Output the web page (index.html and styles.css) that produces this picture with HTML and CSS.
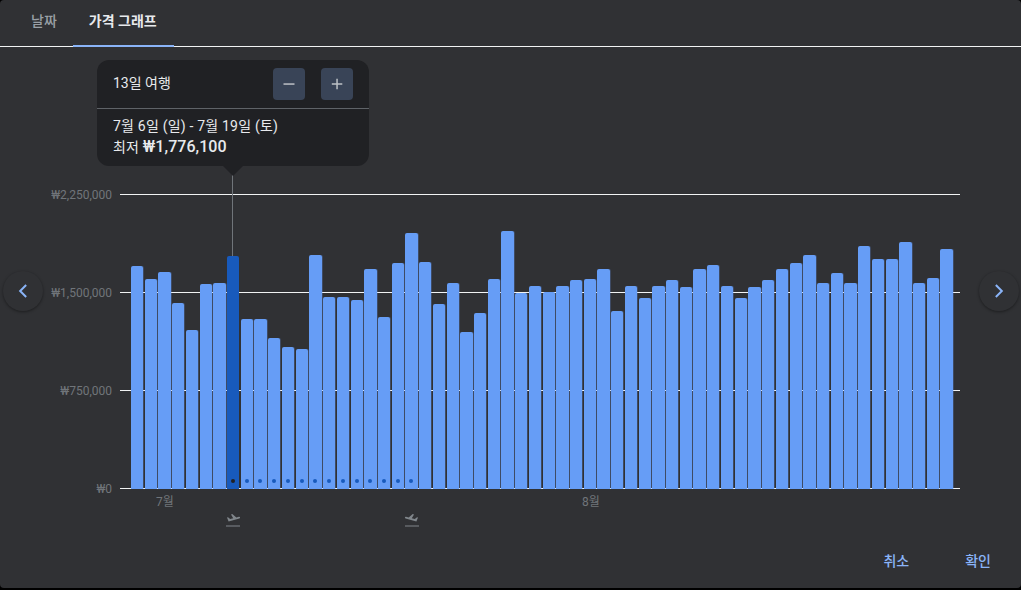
FILE: index.html
```html
<!DOCTYPE html>
<html lang="ko">
<head>
    <meta charset="UTF-8">
    <meta name="viewport" content="width=device-width, initial-scale=1.0">
    <title>가격 그래프</title>
    <link rel="stylesheet" href="styles.css">
</head>
<body>
    <div class="dialog">
        <!-- Tabs -->
        <div class="tabs">
            <div class="tab">날짜</div>
            <div class="tab tab-active">가격 그래프</div>
        </div>

        <!-- Chart -->
        <div class="chart">
            <div class="grid-line" style="top: 147px"></div>
            <div class="grid-line" style="top: 245px"></div>
            <div class="grid-line" style="top: 343px"></div>
            <div class="grid-line" style="top: 441px"></div>

            <div class="axis-label" style="top: 141px">₩2,250,000</div>
            <div class="axis-label" style="top: 239px">₩1,500,000</div>
            <div class="axis-label" style="top: 337px">₩750,000</div>
            <div class="axis-label" style="top: 435px">₩0</div>

            <div class="bars">
                <div class="bar" style="height: 223px"></div>
                <div class="bar" style="height: 210px"></div>
                <div class="bar" style="height: 217px"></div>
                <div class="bar" style="height: 186px"></div>
                <div class="bar" style="height: 159px"></div>
                <div class="bar" style="height: 205px"></div>
                <div class="bar" style="height: 206px"></div>
                <div class="bar bar-selected" style="height: 233px"><span class="dot"></span></div>
                <div class="bar" style="height: 170px"><span class="dot"></span></div>
                <div class="bar" style="height: 170px"><span class="dot"></span></div>
                <div class="bar" style="height: 151px"><span class="dot"></span></div>
                <div class="bar" style="height: 142px"><span class="dot"></span></div>
                <div class="bar" style="height: 140px"><span class="dot"></span></div>
                <div class="bar" style="height: 234px"><span class="dot"></span></div>
                <div class="bar" style="height: 192px"><span class="dot"></span></div>
                <div class="bar" style="height: 192px"><span class="dot"></span></div>
                <div class="bar" style="height: 189px"><span class="dot"></span></div>
                <div class="bar" style="height: 220px"><span class="dot"></span></div>
                <div class="bar" style="height: 172px"><span class="dot"></span></div>
                <div class="bar" style="height: 226px"><span class="dot"></span></div>
                <div class="bar" style="height: 256px"><span class="dot"></span></div>
                <div class="bar" style="height: 227px"></div>
                <div class="bar" style="height: 185px"></div>
                <div class="bar" style="height: 206px"></div>
                <div class="bar" style="height: 157px"></div>
                <div class="bar" style="height: 176px"></div>
                <div class="bar" style="height: 210px"></div>
                <div class="bar" style="height: 258px"></div>
                <div class="bar" style="height: 196px"></div>
                <div class="bar" style="height: 203px"></div>
                <div class="bar" style="height: 197px"></div>
                <div class="bar" style="height: 203px"></div>
                <div class="bar" style="height: 209px"></div>
                <div class="bar" style="height: 210px"></div>
                <div class="bar" style="height: 220px"></div>
                <div class="bar" style="height: 178px"></div>
                <div class="bar" style="height: 203px"></div>
                <div class="bar" style="height: 191px"></div>
                <div class="bar" style="height: 203px"></div>
                <div class="bar" style="height: 209px"></div>
                <div class="bar" style="height: 202px"></div>
                <div class="bar" style="height: 220px"></div>
                <div class="bar" style="height: 224px"></div>
                <div class="bar" style="height: 203px"></div>
                <div class="bar" style="height: 191px"></div>
                <div class="bar" style="height: 202px"></div>
                <div class="bar" style="height: 209px"></div>
                <div class="bar" style="height: 220px"></div>
                <div class="bar" style="height: 226px"></div>
                <div class="bar" style="height: 234px"></div>
                <div class="bar" style="height: 206px"></div>
                <div class="bar" style="height: 216px"></div>
                <div class="bar" style="height: 206px"></div>
                <div class="bar" style="height: 243px"></div>
                <div class="bar" style="height: 230px"></div>
                <div class="bar" style="height: 230px"></div>
                <div class="bar" style="height: 247px"></div>
                <div class="bar" style="height: 206px"></div>
                <div class="bar" style="height: 211px"></div>
                <div class="bar" style="height: 240px"></div>
            </div>

            <div class="month" style="left: 156px">7월</div>
            <div class="month" style="left: 582px">8월</div>

            <svg class="plane" style="left: 225px" viewBox="0 0 16 16">
                <path d="M1 13.500h14v1H1z"/>
                <path d="M2 5.500l1-.3 2.200 1.900 3-.8L6 2.400l1.300-.4 4 3.400 2.600-.7c.6-.2 1.100.1 1.200.6.100.5-.2.900-.7 1.100L3.600 9.500z"/>
            </svg>
            <svg class="plane plane-return" style="left: 404px" viewBox="0 0 16 16">
                <path d="M1 13.500h14v1H1z"/>
                <path d="M2 5.500l1-.3 2.200 1.900 3-.8L6 2.400l1.300-.4 4 3.400 2.600-.7c.6-.2 1.100.1 1.200.6.100.5-.2.900-.7 1.100L3.600 9.500z"/>
            </svg>

            <div class="guide"></div>

            <div class="popup">
                <div class="popup-head">
                    <span class="popup-title">13일 여행</span>
                    <div class="stepper">
                        <button class="step-btn">
                            <svg viewBox="0 0 16 16"><path d="M2.500 7.300h11v1.500h-11z"/></svg>
                        </button>
                        <button class="step-btn">
                            <svg viewBox="0 0 16 16"><path d="M7.300 2.800h1.500v4.500h4.500v1.500H8.800v4.500H7.300V8.800H2.800V7.300h4.500z"/></svg>
                        </button>
                    </div>
                </div>
                <div class="popup-body">
                    <div>7월 6일 (일) - 7월 19일 (토)</div>
                    <div>최저 <b class="price">₩1,776,100</b></div>
                </div>
            </div>

            <button class="nav-btn nav-prev">
                <svg viewBox="0 0 24 24"><path d="M15.800 4.800L8.600 12l7.200 7.200" /></svg>
            </button>
            <button class="nav-btn nav-next">
                <svg viewBox="0 0 24 24"><path d="M8.200 4.800L15.400 12l-7.200 7.200" /></svg>
            </button>
        </div>

        <!-- Footer -->
        <div class="footer">
            <a class="action">취소</a>
            <a class="action">확인</a>
        </div>
    </div>
</body>
</html>
```
FILE: styles.css
```css
* {
    margin: 0;
    padding: 0;
    box-sizing: border-box;
}

body {
    width: 1021px;
    height: 590px;
    background: #000;
    font-family: Roboto, "Noto Sans CJK KR", sans-serif;
    overflow: hidden;
}

.dialog {
    width: 100%;
    height: 588px;
    display: flex;
    flex-direction: column;
    background: #303134;
    border-radius: 4px;
    overflow: hidden;
}

/* Tabs */
.tabs {
    height: 47px;
    flex-shrink: 0;
    display: flex;
    padding-left: 15px;
    border-bottom: 1px solid #f1f3f4;
}

.tab {
    height: 47px;
    padding: 0 16px 7px;
    display: flex;
    align-items: center;
    font-size: 14px;
    font-weight: 500;
    color: #9aa0a6;
}

.tab-active {
    width: 101px;
    font-weight: 700;
    color: #e8eaed;
    border-bottom: 2px solid #8ab4f8;
    padding-bottom: 5px;
}

/* Chart */
.chart {
    position: relative;
    flex: 1;
}

.grid-line {
    position: absolute;
    left: 120px;
    width: 840px;
    height: 1px;
    background: #f1f3f4;
}

.axis-label {
    position: absolute;
    right: 909px;
    font-size: 12px;
    line-height: 14px;
    color: #70757a;
}

.bars {
    position: absolute;
    left: 131px;
    top: 153px;
    width: 836px;
    height: 289px;
    display: grid;
    grid-template-columns: repeat(60, 13.73px);
    align-items: end;
}

.bar {
    position: relative;
    width: 12.300px;
    background: #669df6;
    border-radius: 2px 2px 0 0;
    box-shadow: 1px 0 0 rgba(102, 157, 246, 0.25);
}

.bar-selected {
    background: #185abc;
    box-shadow: none;
}

.dot {
    position: absolute;
    left: 4px;
    bottom: 6px;
    width: 4px;
    height: 4px;
    border-radius: 50%;
    background: #185abc;
}

.bar-selected .dot {
    background: #202124;
}

.month {
    position: absolute;
    top: 448px;
    font-size: 12px;
    line-height: 14px;
    color: #70757a;
}

.plane {
    position: absolute;
    top: 465px;
    width: 16px;
    height: 16px;
    fill: #80868b;
}

.plane-return {
    transform: scaleX(-1);
}

.guide {
    position: absolute;
    left: 232px;
    top: 123px;
    width: 1px;
    height: 86px;
    background: #70757a;
}

/* Popup */
.popup {
    position: absolute;
    left: 97px;
    top: 13px;
    width: 272px;
    height: 106px;
    background: #202124;
    border-radius: 12px;
    color: #e8eaed;
    font-size: 14px;
}

.popup::after {
    content: '';
    position: absolute;
    left: 126px;
    bottom: -10px;
    border-left: 10px solid transparent;
    border-right: 10px solid transparent;
    border-top: 10px solid #202124;
}

.popup-head {
    height: 49px;
    padding: 8px 16px;
    display: flex;
    align-items: center;
    justify-content: space-between;
    border-bottom: 1px solid #5f6368;
}

.popup-title {
    margin-top: -5px;
}

.stepper {
    display: flex;
    gap: 16px;
}

.step-btn {
    width: 32px;
    height: 32px;
    display: flex;
    align-items: center;
    justify-content: center;
    background: #394457;
    border: none;
    border-radius: 4px;
}

.step-btn svg {
    width: 16px;
    height: 16px;
    fill: #bdc1c6;
}

.popup-body {
    padding: 7px 16px;
    line-height: 21px;
    letter-spacing: 0.2px;
}

.price {
    font-size: 16px;
    font-weight: 500;
    line-height: 1;
    letter-spacing: 0.05px;
}

/* Side arrows */
.nav-btn {
    position: absolute;
    top: 224px;
    width: 40px;
    height: 40px;
    display: flex;
    align-items: center;
    justify-content: center;
    background: #303134;
    border: none;
    border-radius: 50%;
    box-shadow: 0 1px 3px rgba(0, 0, 0, 0.4);
}

.nav-btn svg {
    width: 20px;
    height: 20px;
    fill: none;
    stroke: #8ab4f8;
    stroke-width: 2.400;
}

.nav-prev {
    left: 3px;
}

.nav-next {
    right: 2px;
}

/* Footer */
.footer {
    display: flex;
    justify-content: flex-end;
    gap: 56px;
    padding: 0 30px 18px 0;
}

.action {
    font-size: 14px;
    font-weight: 500;
    line-height: 18px;
    color: #8ab4f8;
}
```
